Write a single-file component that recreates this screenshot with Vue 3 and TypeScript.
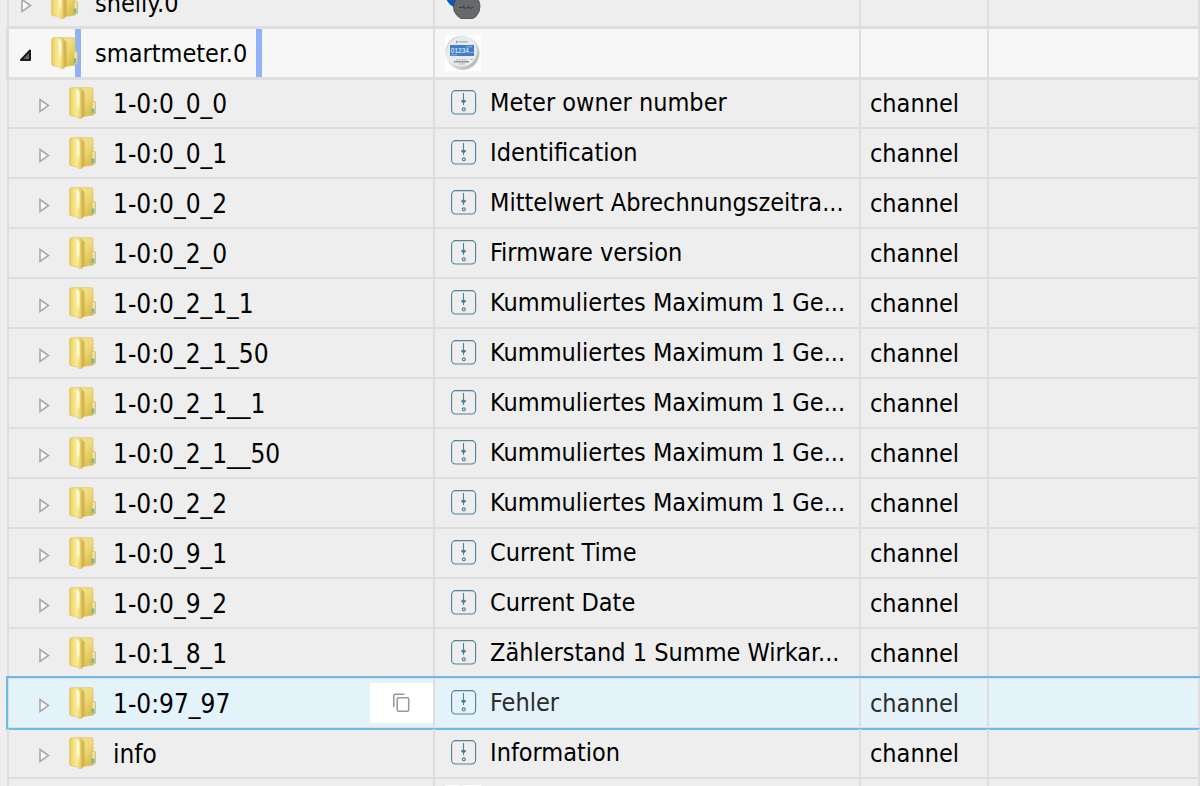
<script setup lang="ts">
interface TreeRow {
  id: string
  level: number
  title: string
  role: string
  icon: 'channel' | 'meter' | 'shelly'
  state?: 'open' | 'selected'
}

const channel = (id: string, title: string): TreeRow => ({
  id,
  level: 1,
  title,
  role: 'channel',
  icon: 'channel',
})

const rows: TreeRow[] = [
  { id: 'shelly.0', level: 0, title: '', role: '', icon: 'shelly' },
  { id: 'smartmeter.0', level: 0, title: '', role: '', icon: 'meter', state: 'open' },
  channel('1-0:0_0_0', 'Meter owner number'),
  channel('1-0:0_0_1', 'Identification'),
  channel('1-0:0_0_2', 'Mittelwert Abrechnungszeitra...'),
  channel('1-0:0_2_0', 'Firmware version'),
  channel('1-0:0_2_1_1', 'Kummuliertes Maximum 1 Ge...'),
  channel('1-0:0_2_1_50', 'Kummuliertes Maximum 1 Ge...'),
  channel('1-0:0_2_1__1', 'Kummuliertes Maximum 1 Ge...'),
  channel('1-0:0_2_1__50', 'Kummuliertes Maximum 1 Ge...'),
  channel('1-0:0_2_2', 'Kummuliertes Maximum 1 Ge...'),
  channel('1-0:0_9_1', 'Current Time'),
  channel('1-0:0_9_2', 'Current Date'),
  channel('1-0:1_8_1', 'Zählerstand 1 Summe Wirkar...'),
  { ...channel('1-0:97_97', 'Fehler'), state: 'selected' },
  channel('info', 'Information'),
  { id: '', level: 0, title: '', role: '', icon: 'meter' },
]
</script>

<template>
  <main class="viewport">
    <svg class="defs" width="0" height="0" aria-hidden="true">
      <defs>
        <linearGradient id="folder-front" x1="0" x2="1">
          <stop offset="0" stop-color="#e6c858" />
          <stop offset="0.25" stop-color="#f3e07c" />
          <stop offset="0.55" stop-color="#f8ea9c" />
          <stop offset="0.8" stop-color="#ecd368" />
          <stop offset="1" stop-color="#c9a844" />
        </linearGradient>
        <linearGradient id="folder-back" x1="0" y1="0" x2="0.6" y2="1">
          <stop offset="0" stop-color="#f4e690" />
          <stop offset="0.5" stop-color="#edd876" />
          <stop offset="1" stop-color="#dcbc49" />
        </linearGradient>
        <linearGradient id="folder-shine" x1="0" y1="0" x2="0" y2="1">
          <stop offset="0" stop-color="#fffde6" />
          <stop offset="0.6" stop-color="#fff8cc" />
          <stop offset="1" stop-color="#f6e689" stop-opacity="0" />
        </linearGradient>
        <linearGradient id="meter-body" x1="0" y1="0" x2="1" y2="1">
          <stop offset="0" stop-color="#c4c6ca" />
          <stop offset="0.4" stop-color="#eef0f3" />
          <stop offset="1" stop-color="#a3a5aa" />
        </linearGradient>
      </defs>
    </svg>
    <table class="tree">
      <colgroup>
        <col class="c-id" />
        <col class="c-title" />
        <col class="c-role" />
        <col />
      </colgroup>
      <tbody>
        <tr v-for="(row, i) in rows" :key="i" :class="row.state">
          <td>
            <div class="cell id-cell" :class="'level-' + row.level">
              <button class="toggle" type="button" aria-label="Toggle">
                <svg v-if="row.state === 'open'" width="14" height="16" viewBox="0 0 14 16">
                  <path d="M10 2.500v9.500H1z" fill="#6a6a6a" stroke="#1a1a1a" stroke-width="2" stroke-linejoin="round" />
                </svg>
                <svg v-else width="14" height="16" viewBox="0 0 14 16">
                  <path d="M2 1.500v12L10.500 7.500z" fill="#fafafa" stroke="#a9a9a9" stroke-width="1.600" />
                </svg>
              </button>
              <svg class="folder" width="28" height="32" viewBox="0 0 28 32" aria-hidden="true">
                <path d="M9 .7h13.500q1.500 0 1.500 1.500v12l2.500 1v11l-3 2-11 1.500z" fill="url(#folder-back)" stroke="#dcc16a" stroke-width=".7" />
                <path d="M13.500 4.500h2V29l-4 2z" fill="#c8a743" opacity=".75" />
                <path d="M.6 2.500Q.8 .8 2.500 .7H9.500q4.500 .5 4.500 4.500v25q-.5 1.800-4 1.300L7.500 29.500 2 28.700Q.6 28.400 .6 27z" fill="url(#folder-front)" stroke="#d9bd60" stroke-width=".6" />
                <path d="M7.500 2.500q3 1 3 4V27l-2.500-2z" fill="url(#folder-shine)" />
                <path d="M23 15.500q0-1 1.700-1 1.600 0 1.600 1V26l-3.300 1.500z" fill="#eee6b0" stroke="#cdb65b" stroke-width=".7" />
                <path d="M22.800 21.500h2.500v4l-2.500 1z" fill="#65b8b4" />
              </svg>
              <span class="name">{{ row.id }}</span>
              <button v-if="row.state === 'selected'" class="copy" type="button" aria-label="Copy">
                <svg width="18" height="20" viewBox="0 0 18 20" fill="none" stroke="#999" stroke-width="1.600">
                  <path d="M.8 14V2.500q0-1.300 1.300-1.300H11.500" />
                  <rect x="4.200" y="4.800" width="11.500" height="13.500" rx="1.500" />
                </svg>
              </button>
            </div>
          </td>
          <td>
            <div class="cell title-cell" :class="'with-' + row.icon">
              <svg v-if="row.icon === 'channel'" width="26" height="26" viewBox="0 0 26 26" fill="none" stroke="#4f8199" aria-hidden="true">
                <rect x=".6" y=".6" width="24" height="23.400" rx="4" stroke-width="1.100" />
                <path d="M12.500 3v12" stroke-width="1.100" />
                <path d="M10.700 10.300h3.800v1.500l-1.900 1-1.900-1z" fill="#3f758f" stroke-width=".6" />
                <circle cx="12.800" cy="19.300" r="1.500" stroke-width="1.200" />
              </svg>
              <svg v-else-if="row.icon === 'meter'" width="36" height="36" viewBox="0 0 36 36" aria-hidden="true">
                <rect width="36" height="36" fill="#fff" />
                <circle cx="18" cy="18.400" r="16.600" fill="#ccc" />
                <circle cx="17" cy="17.300" r="16.800" fill="url(#meter-body)" />
                <circle cx="17" cy="16.800" r="14.800" fill="#e9ebef" />
                <path d="M11 7.800l1.200-2v2zM14 6.900h9" fill="#777" stroke="#999" />
                <rect x="5" y="10" width="24" height="11" fill="#3f7dc9" />
                <text x="5.800" y="18.200" font-size="6.500" font-family="Liberation Sans, sans-serif" fill="#fff">01234</text>
                <path d="M24.500 17.500h4M21 11.800h6M6 19.800h6" stroke="#a9c8ee" stroke-width=".8" />
                <path d="M11 24.800h11M25 24.500h3" stroke="#b1b3b6" stroke-width=".8" />
                <path d="M9 26.800h15" stroke="#75777a" stroke-width="1.400" stroke-dasharray="1.200 .4" />
                <path d="M14 28.900h6" stroke="#aaa" stroke-width=".8" />
              </svg>
              <svg v-else width="36" height="42" viewBox="0 0 36 42" aria-hidden="true">
                <circle cx="15" cy="12" r="14.500" fill="#0758c8" />
                <path d="M15 13.500q6-5.500 14 0 6 4 6 11 0 6-4.500 10.500l-3 1.500H16l-4-3q-4-4-3.500-10 .5-6 6.500-10z" fill="#68696b" stroke="#444" stroke-width=".8" />
                <path d="M14 25.500h3l2-1.500-.5 2h3l2-1.500v1.500h3l2-1.500" fill="none" stroke="#37383a" stroke-width=".9" />
              </svg>
              <span class="title">{{ row.title }}</span>
            </div>
          </td>
          <td>
            <div class="cell role-cell">{{ row.role }}</div>
          </td>
          <td></td>
        </tr>
      </tbody>
    </table>
  </main>
</template>

<style>
body {
  margin: 0;
  background: #eee;
}
</style>

<style scoped>
.viewport {
  height: 100vh;
  overflow: hidden;
  background: #eee;
  color: #000;
  font-family: "DejaVu Sans Condensed", "DejaVu Sans", sans-serif;
  font-size: 25px;
  line-height: 32px;
}
.defs {
  position: absolute;
}
/* The list is scrolled partway into its first row. */
.tree {
  width: calc(100% - 7px);
  margin: -21px 0 0 7px;
  table-layout: fixed;
  border-collapse: separate;
  border-spacing: 0;
}
.c-id,
.c-title {
  width: 426px;
}
.c-role {
  width: 128px;
}
tr {
  position: relative;
}
td {
  height: 48px;
  padding: 0;
  border-bottom: 2px solid #dedede;
  border-left: 2px solid #dedede;
}
td:last-child {
  border-right: 2px solid #dedede;
}
.open td {
  background: #f7f7f7;
}
.selected td {
  background: #e4f2fa;
}
.open td:last-child::after,
.selected td:last-child::after {
  content: "";
  position: absolute;
  inset: -3px -3px -1px -1px;
  pointer-events: none;
}
.open td:last-child::after {
  border: 3px solid #dedede;
}
.selected td:last-child::after {
  border: 2px solid #6cbde6;
}
.cell {
  display: flex;
  align-items: center;
  box-sizing: border-box;
  height: 48px;
  white-space: nowrap;
}
.level-0 {
  padding-left: 11px;
}
.level-1 {
  padding-left: 29px;
}
button {
  display: flex;
  padding: 0;
  border: 0;
  background: none;
  cursor: pointer;
}
.toggle {
  margin-top: 5px;
}
.folder {
  z-index: 1;
  flex: none;
  margin-left: 17px;
}
.name {
  margin-left: 16px;
  padding-top: 2px;
  line-height: 46px;
}
.level-1 .name {
  font-size: 26px;
}
.open .name {
  margin-left: -4px;
  padding: 2px 9px 0 14px;
  border: solid #91b1f8;
  border-width: 0 6px;
}
.copy {
  align-items: center;
  justify-content: center;
  width: 63px;
  height: 40px;
  margin-left: auto;
  background: #fff;
}
.title-cell {
  padding-left: 10px;
}
.with-channel {
  padding-left: 16px;
}
.title {
  margin-left: 13px;
}
.role-cell {
  padding: 2px 0 0 9px;
}
.selected .title,
.selected .role-cell {
  color: #2c2c2c;
}
</style>
